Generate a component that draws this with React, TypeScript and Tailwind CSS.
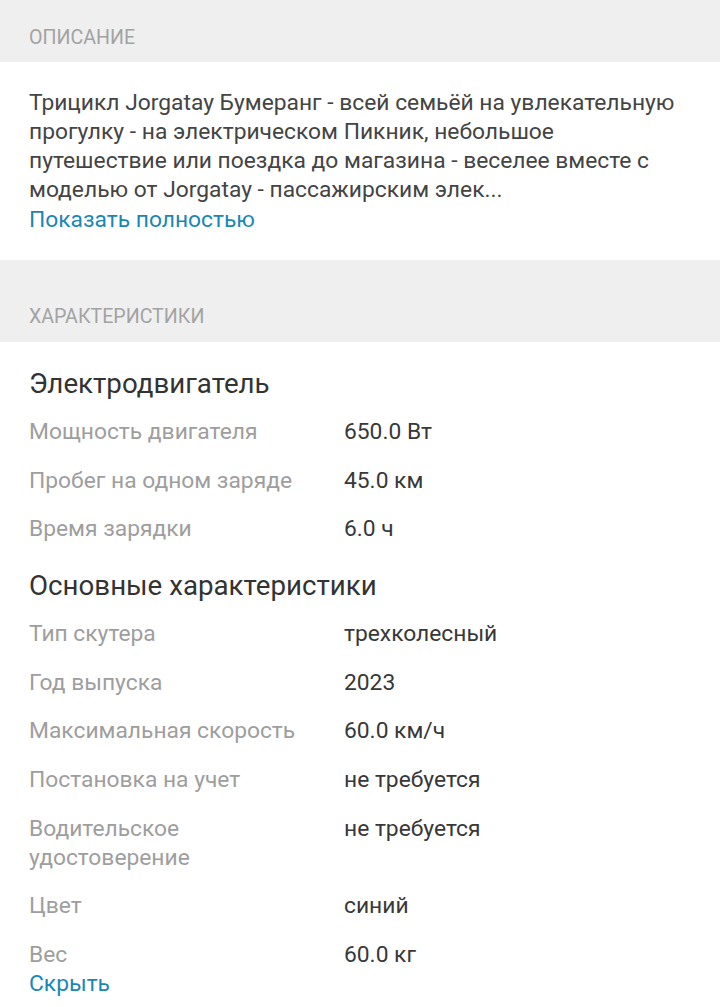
import React from 'react';

type Spec = { label: string; value: string };

const engine: Spec[] = [
  { label: 'Мощность двигателя', value: '650.0 Вт' },
  { label: 'Пробег на одном заряде', value: '45.0 км' },
  { label: 'Время зарядки', value: '6.0 ч' },
];

const general: Spec[] = [
  { label: 'Тип скутера', value: 'трехколесный' },
  { label: 'Год выпуска', value: '2023' },
  { label: 'Максимальная скорость', value: '60.0 км/ч' },
  { label: 'Постановка на учет', value: 'не требуется' },
  { label: 'Водительское удостоверение', value: 'не требуется' },
  { label: 'Цвет', value: 'синий' },
  { label: 'Вес', value: '60.0 кг' },
];

const SpecGroup: React.FC<{ title: string; items: Spec[] }> = ({ title, items }) => (
  <div>
    <h3 className="text-[27.7px] leading-[34px] text-[#333]">{title}</h3>
    <div className="mt-[16px] flex flex-col gap-[19.6px]">
      {items.map((s) => (
        <div key={s.label} className="grid grid-cols-[315px_1fr] text-[22.8px] leading-[29px]">
          <span className="text-[#9e9e9e] pr-6">{s.label}</span>
          <span className="text-[#383838]">{s.value}</span>
        </div>
      ))}
    </div>
  </div>
);

export default function App() {
  return (
    <div className="min-h-screen bg-white font-['Roboto',sans-serif]">
      <div className="bg-[#efefef] h-[62px] px-[29px] pt-[26px]">
        <h2 className="text-[19.6px] leading-[24px] text-[#a3a3a3] uppercase">Описание</h2>
      </div>

      <div className="px-[29px] pt-[26px] pb-[26px] text-[22.8px] leading-[29px]">
        <p className="text-[#444]">
          Трицикл Jorgatay Бумеранг - всей семьёй на увлекательную прогулку - на электрическом Пикник,
          небольшое путешествие или поездка до магазина - веселее вместе с моделью от Jorgatay -
          пассажирским элек...
        </p>
        <button className="text-[#1a87b5] mt-px">Показать полностью</button>
      </div>

      <div className="bg-[#efefef] h-[82px] px-[29px] pt-[45px]">
        <h2 className="text-[19.6px] leading-[24px] text-[#a3a3a3] uppercase">Характеристики</h2>
      </div>

      <div className="px-[29px] pt-[25px]">
        <SpecGroup title="Электродвигатель" items={engine} />
        <div className="mt-[26px]">
          <SpecGroup title="Основные характеристики" items={general} />
        </div>
        <button className="text-[22.8px] leading-[29px] text-[#1a87b5]">Скрыть</button>
      </div>
    </div>
  );
}
